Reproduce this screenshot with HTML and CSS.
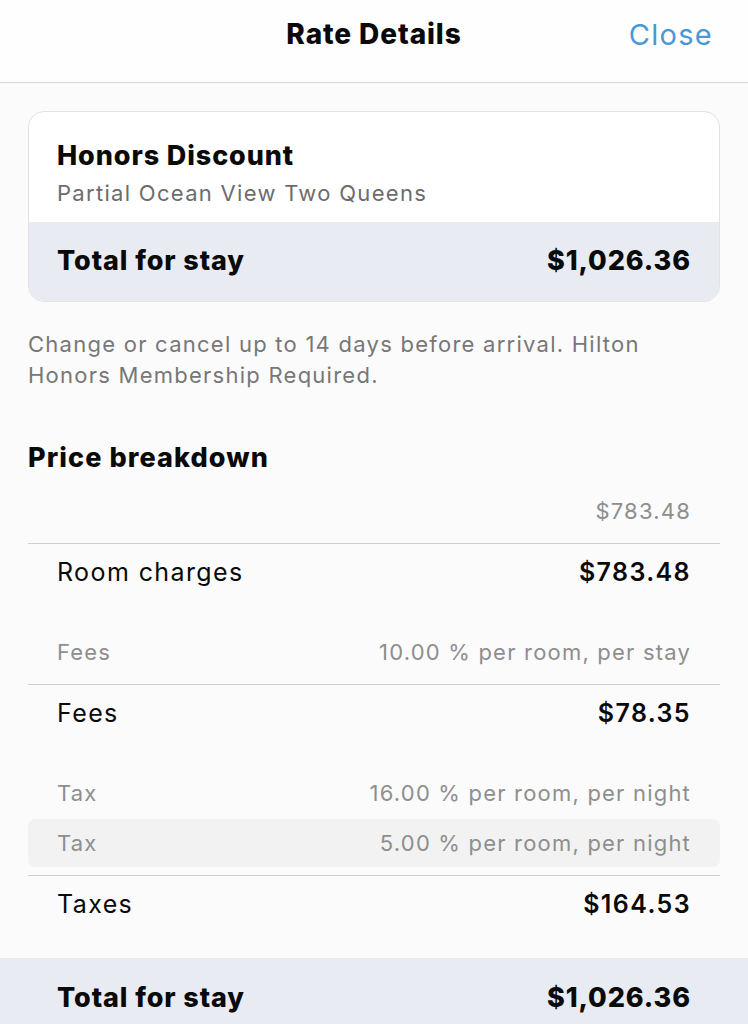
FILE: index.html
```html
<!DOCTYPE html>
<html lang="en">
<head>
<meta charset="utf-8">
<title>Rate Details</title>
<link rel="stylesheet" href="styles.css">
</head>
<body>
<header class="topbar">
  <span class="topbar-spacer"></span>
  <h1 class="topbar-title">Rate Details</h1>
  <a class="topbar-close" href="#">Close</a>
</header>
<main class="content">
  <section class="rate-card">
    <div class="rate-card-head">
      <h2 class="rate-name">Honors Discount</h2>
      <p class="rate-room">Partial Ocean View Two Queens</p>
    </div>
    <div class="rate-card-total">
      <span>Total for stay</span>
      <span>$1,026.36</span>
    </div>
  </section>
  <p class="policy">Change or cancel up to 14 days before arrival. Hilton Honors Membership Required.</p>
  <h2 class="section-title">Price breakdown</h2>
  <div class="group">
    <div class="detail-list">
      <div class="detail-row"><span></span><span>$783.48</span></div>
    </div>
    <div class="total-row"><span>Room charges</span><span class="amount">$783.48</span></div>
  </div>
  <div class="group">
    <div class="detail-list">
      <div class="detail-row"><span>Fees</span><span>10.00 % per room, per stay</span></div>
    </div>
    <div class="total-row"><span>Fees</span><span class="amount">$78.35</span></div>
  </div>
  <div class="group last">
    <div class="detail-list">
      <div class="detail-row"><span>Tax</span><span>16.00 % per room, per night</span></div>
      <div class="detail-row shaded"><span>Tax</span><span>5.00 % per room, per night</span></div>
    </div>
    <div class="total-row"><span>Taxes</span><span class="amount">$164.53</span></div>
  </div>
</main>
<footer class="grand-total">
  <span>Total for stay</span>
  <span>$1,026.36</span>
</footer>
</body>
</html>
```
FILE: styles.css
```css
* { box-sizing: border-box; }
html, body { margin: 0; padding: 0; }
body {
  background: #fbfbfb;
  font-family: Inter, "Liberation Sans", Arial, sans-serif;
  color: #0a0a0a;
  width: 748px;
  overflow: hidden;
}
.topbar {
  height: 83px;
  border-bottom: 1px solid #d8d8d8;
  display: grid;
  grid-template-columns: 1fr auto 1fr;
  align-items: center;
  padding: 0 35px 14px;
  background: #fefefe;
}
.topbar-title {
  margin: 0;
  font-size: 28px;
  font-weight: 800;
  letter-spacing: 0.9px;
}
.topbar-close {
  justify-self: end;
  color: #4a98d3;
  font-size: 29px;
  letter-spacing: 1.3px;
  text-decoration: none;
}
.content {
  padding: 28px 28px 0;
}
.rate-card {
  border: 1px solid #e2e2e2;
  border-radius: 16px;
  overflow: hidden;
  background: #fff;
}
.rate-card-head {
  height: 110px;
  padding: 28px 28px 0;
}
.rate-name {
  margin: 0;
  font-size: 27px;
  font-weight: 800;
  line-height: 32px;
  letter-spacing: 0.9px;
}
.rate-room {
  margin: 6px 0 0;
  font-size: 22px;
  line-height: 30px;
  letter-spacing: 1.3px;
  color: #6c6c6c;
}
.rate-card-total {
  height: 79px;
  background: #e8ecf2;
  display: flex;
  justify-content: space-between;
  align-items: center;
  padding: 0 28px 3px;
  font-size: 27px;
  font-weight: 800;
  letter-spacing: 0.9px;
}
.policy {
  margin: 27px 0 0;
  font-size: 22px;
  line-height: 31px;
  letter-spacing: 1.25px;
  color: #777;
}
.section-title {
  margin: 47px 0 9px;
  font-size: 27px;
  font-weight: 800;
  line-height: 40px;
  letter-spacing: 1.1px;
}
.group {
  margin-bottom: 28px;
}
.group.last {
  margin-bottom: 26px;
}
.detail-list {
  display: flex;
  flex-direction: column;
  gap: 2px;
  padding-bottom: 8px;
  border-bottom: 1.5px solid #cfcfcf;
}
.detail-row {
  height: 48px;
  display: flex;
  justify-content: space-between;
  align-items: center;
  padding: 0 29px;
  font-size: 22px;
  letter-spacing: 1.2px;
  color: #8e8e8e;
  border-radius: 7px;
}
.detail-row.shaded {
  background: #f2f2f2;
}
.total-row {
  height: 56px;
  display: flex;
  justify-content: space-between;
  align-items: center;
  padding: 0 29px;
  font-size: 25px;
  letter-spacing: 1.4px;
}
.total-row .amount {
  font-weight: 600;
}
.grand-total {
  height: 78px;
  background: #e8ecf2;
  display: flex;
  justify-content: space-between;
  align-items: center;
  padding: 0 57px;
  font-size: 27px;
  font-weight: 800;
  letter-spacing: 0.9px;
}
```
